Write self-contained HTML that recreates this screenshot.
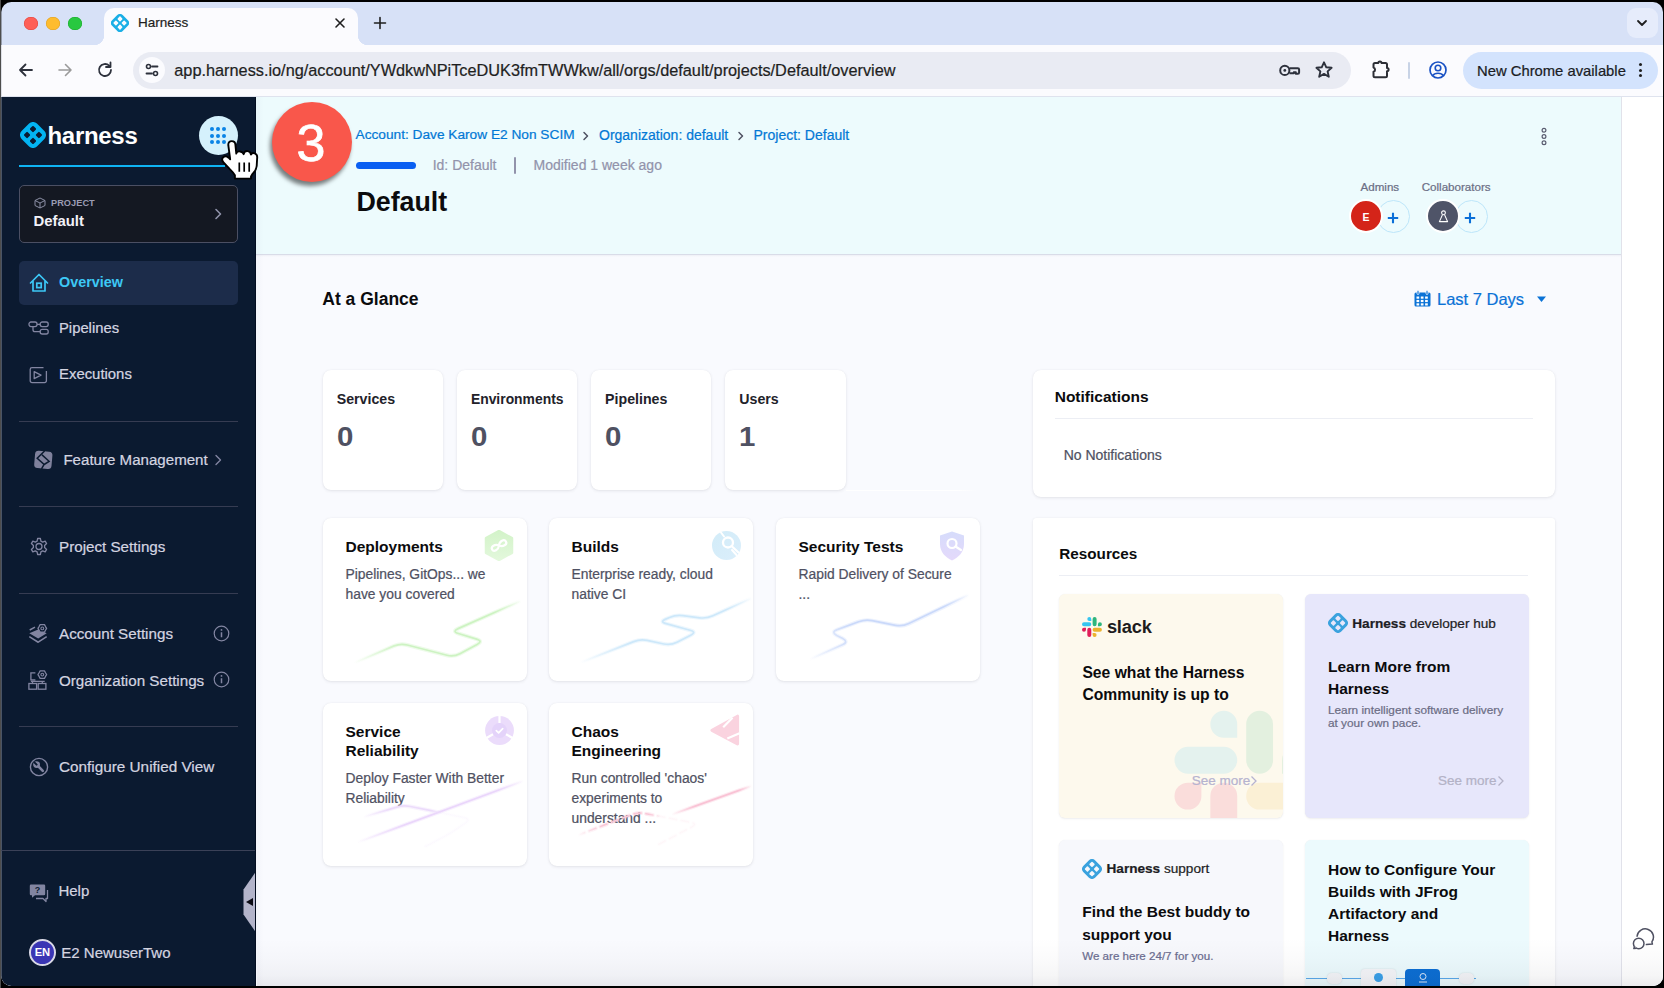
<!DOCTYPE html><html><head><meta charset="utf-8"><style>
html,body{margin:0;padding:0;}
body{width:1664px;height:988px;background:#000;position:relative;overflow:hidden;font-family:"Liberation Sans", sans-serif;}
.a{position:absolute;}
.t{position:absolute;white-space:nowrap;}
.r{-webkit-text-stroke:0.22px currentColor;}
#win{position:absolute;left:0;top:0;width:1664px;height:988px;clip-path:inset(2px 1px 2px 1.3px round 10px);background:#d7e1f7;}
</style></head><body>
<div class="a" style="left:0;top:0;width:1px;height:988px;background:#4d4d4d"></div>
<div id="win">

<div class="a" style="left:24.15px;top:16.6px;width:13.7px;height:13.7px;border-radius:50%;background:#fe5f57;box-shadow:inset 0 0 0 0.6px #e14640"></div>
<div class="a" style="left:46.15px;top:16.6px;width:13.7px;height:13.7px;border-radius:50%;background:#febc2e;box-shadow:inset 0 0 0 0.6px #dfa023"></div>
<div class="a" style="left:68.15px;top:16.6px;width:13.7px;height:13.7px;border-radius:50%;background:#28c840;box-shadow:inset 0 0 0 0.6px #1aab29"></div>
<div class="a" style="left:104px;top:8px;width:254px;height:40px;background:#fbfbfe;border-radius:10px 10px 0 0"></div>
<div class="a" style="left:94px;top:35px;width:10px;height:10px;background:radial-gradient(circle at 0 0, transparent 10px, #fbfbfe 10.5px)"></div>
<div class="a" style="left:358px;top:35px;width:10px;height:10px;background:radial-gradient(circle at 100% 0, transparent 10px, #fbfbfe 10.5px)"></div>
<svg class="a" style="left:111.2px;top:14.2px;" width="18" height="18" viewBox="0 0 18 18"><g transform="translate(9.0,9.0) rotate(45)"><rect x="-7.50" y="-7.50" width="15.00" height="15.00" rx="3.84" fill="#1aafe6"/><rect x="-4.86" y="-4.86" width="3.91" height="3.91" rx="0.70" fill="#fbfbfe"/><rect x="-4.86" y="0.96" width="3.91" height="3.91" rx="0.70" fill="#fbfbfe"/><rect x="0.96" y="-4.86" width="3.91" height="3.91" rx="0.70" fill="#fbfbfe"/><rect x="0.96" y="0.96" width="3.91" height="3.91" rx="0.70" fill="#fbfbfe"/></g></svg>
<div class="t r" style="left:138.0px;top:16.0px;font-size:13.5px;line-height:13.5px;color:#1f1f1f;font-weight:400;">Harness</div>
<svg class="a" style="left:334px;top:17px;" width="12" height="12" viewBox="0 0 12 12"><path d="M2 2L10 10M10 2L2 10" stroke="#1f1f1f" stroke-width="1.6" stroke-linecap="round"/></svg>
<svg class="a" style="left:373px;top:16px;" width="14" height="14" viewBox="0 0 14 14"><path d="M7 1.5V12.5M1.5 7H12.5" stroke="#1f1f1f" stroke-width="1.6" stroke-linecap="round"/></svg>
<div class="a" style="left:1627px;top:8px;width:31px;height:30px;background:#e6ecfb;border-radius:9px"></div>
<svg class="a" style="left:1636px;top:17px;" width="12" height="12" viewBox="0 0 12 12"><path d="M2 4L6 8L10 4" stroke="#1f1f1f" stroke-width="1.8" fill="none" stroke-linecap="round" stroke-linejoin="round"/></svg>
<div class="a" style="left:0px;top:45px;width:1664px;height:52px;background:#fbfbfe"></div>
<div class="a" style="left:0px;top:96px;width:1664px;height:1px;background:#dfe3ee"></div>
<svg class="a" style="left:16px;top:60px;" width="20" height="20" viewBox="0 0 20 20"><path d="M16 10H4M9.5 4.5L4 10L9.5 15.5" stroke="#2d313c" stroke-width="1.8" fill="none" stroke-linecap="round" stroke-linejoin="round"/></svg>
<svg class="a" style="left:55px;top:60px;" width="20" height="20" viewBox="0 0 20 20"><path d="M4 10H16M10.5 4.5L16 10L10.5 15.5" stroke="#9a9a9a" stroke-width="1.6" fill="none" stroke-linecap="round" stroke-linejoin="round"/></svg>
<svg class="a" style="left:95px;top:60px;" width="20" height="20" viewBox="0 0 20 20"><path d="M16 10A6 6 0 1 1 14.2 5.7" stroke="#2d313c" stroke-width="1.8" fill="none" stroke-linecap="round"/><path d="M15.5 2.5V7H11" stroke="#2d313c" stroke-width="1.8" fill="none" stroke-linecap="round" stroke-linejoin="round"/></svg>
<div class="a" style="left:133px;top:52px;width:1218px;height:37px;background:#e9ebf3;border-radius:18.5px"></div>
<div class="a" style="left:139px;top:57px;width:26px;height:26px;background:#fbfbfe;border-radius:50%"></div>
<svg class="a" style="left:142px;top:60px;" width="20" height="20" viewBox="0 0 20 20"><circle cx="6.5" cy="6.5" r="2" stroke="#2d313c" stroke-width="1.6" fill="none"/><path d="M10 6.5H15.5" stroke="#2d313c" stroke-width="1.8" stroke-linecap="round"/><circle cx="13.5" cy="13.5" r="2" stroke="#2d313c" stroke-width="1.6" fill="none"/><path d="M4.5 13.5H10" stroke="#2d313c" stroke-width="1.8" stroke-linecap="round"/></svg>
<div class="t r" style="left:174.3px;top:62.2px;font-size:16.3px;line-height:16.3px;color:#1f1f1f;font-weight:400;">app.harness.io/ng/account/YWdkwNPiTceDUK3fmTWWkw/all/orgs/default/projects/Default/overview</div>
<svg class="a" style="left:1276px;top:60px;" width="26" height="20" viewBox="0 0 26 20"><circle cx="8.8" cy="10.4" r="4.6" stroke="#2d313c" stroke-width="2" fill="none"/><circle cx="8.8" cy="10.4" r="1.4" fill="#2d313c"/><path d="M13.5 8.2H21.8A1.3 1.3 0 0 1 23.1 9.5V12.6A1.2 1.2 0 0 1 21.9 13.8H19.8V12.2H17.8V13.2H13.5" stroke="#2d313c" stroke-width="2" fill="none" stroke-linejoin="round"/></svg>
<svg class="a" style="left:1314px;top:60px;" width="20" height="20" viewBox="0 0 20 20"><path d="M10 2.3L12.3 7.3L17.6 7.8L13.6 11.4L14.8 16.7L10 13.9L5.2 16.7L6.4 11.4L2.4 7.8L7.7 7.3Z" stroke="#2d313c" stroke-width="1.9" fill="none" stroke-linejoin="round"/></svg>
<svg class="a" style="left:1370px;top:59px;" width="22" height="21" viewBox="0 0 22 21"><path d="M3.5 5.5A1.5 1.5 0 0 1 5 4H8.3A1.6 1.6 0 0 1 11.5 4H15.5A1.5 1.5 0 0 1 17 5.5V9A1.6 1.6 0 0 1 17 12.2V16.8A1.5 1.5 0 0 1 15.5 18.3H5A1.5 1.5 0 0 1 3.5 16.8V12.8A2.2 2.2 0 0 0 3.5 8.6Z" stroke="#2d2f36" stroke-width="2" fill="none" stroke-linejoin="round"/></svg>
<div class="a" style="left:1408px;top:62px;width:2px;height:17px;background:#c8d3e6;border-radius:1px"></div>
<svg class="a" style="left:1428px;top:60px;" width="20" height="20" viewBox="0 0 20 20"><circle cx="10" cy="10" r="8" stroke="#1a52c4" stroke-width="1.7" fill="none"/><circle cx="10" cy="8" r="2.8" stroke="#1a52c4" stroke-width="1.6" fill="none"/><path d="M4.8 15.5C6.5 12.5 13.5 12.5 15.2 15.5" stroke="#1a52c4" stroke-width="1.6" fill="none"/></svg>
<div class="a" style="left:1463px;top:52px;width:195px;height:37px;background:#d3e3fd;border-radius:18.5px"></div>
<div class="t r" style="left:1477.0px;top:63.5px;font-size:14.8px;line-height:14.8px;color:#1a1c24;font-weight:400;">New Chrome available</div>
<div class="a" style="left:1638.5px;top:63.0px;width:3px;height:3px;background:#1f1f1f;border-radius:50%"></div>
<div class="a" style="left:1638.5px;top:68.5px;width:3px;height:3px;background:#1f1f1f;border-radius:50%"></div>
<div class="a" style="left:1638.5px;top:74.0px;width:3px;height:3px;background:#1f1f1f;border-radius:50%"></div>
<div class="a" style="left:0px;top:97px;width:1664px;height:891px;background:#f9fafe"></div>
<div class="a" style="left:1621px;top:97px;width:43px;height:891px;background:#fff;border-left:1px solid #e1e2ea"></div>
<div class="a" style="left:1px;top:97px;width:255px;height:891px;background:#0b1a30"></div>
<svg class="a" style="left:19.5px;top:121.8px;" width="26" height="26" viewBox="0 0 26 26"><g transform="translate(13.0,13.0) rotate(45)"><rect x="-10.83" y="-10.83" width="21.67" height="21.67" rx="5.54" fill="#03b4f2"/><rect x="-6.67" y="-6.67" width="4.94" height="4.94" rx="1.01" fill="#0b1a30"/><rect x="-6.67" y="1.73" width="4.94" height="4.94" rx="1.01" fill="#0b1a30"/><rect x="1.73" y="-6.67" width="4.94" height="4.94" rx="1.01" fill="#0b1a30"/><rect x="1.73" y="1.73" width="4.94" height="4.94" rx="1.01" fill="#0b1a30"/></g></svg>
<div class="t" style="left:47.5px;top:123.9px;font-size:24.0px;line-height:24.0px;color:#ffffff;font-weight:700;letter-spacing:-0.3px;">harness</div>
<div class="a" style="left:198.5px;top:116px;width:39px;height:39px;background:#d5f1fc;border-radius:50%"></div>
<div class="a" style="left:209.5px;top:127.15px;width:4.2px;height:4.2px;background:#0a84e6;border-radius:50%"></div>
<div class="a" style="left:209.5px;top:133.55px;width:4.2px;height:4.2px;background:#0a84e6;border-radius:50%"></div>
<div class="a" style="left:209.5px;top:139.95px;width:4.2px;height:4.2px;background:#0a84e6;border-radius:50%"></div>
<div class="a" style="left:215.9px;top:127.15px;width:4.2px;height:4.2px;background:#0a84e6;border-radius:50%"></div>
<div class="a" style="left:215.9px;top:133.55px;width:4.2px;height:4.2px;background:#0a84e6;border-radius:50%"></div>
<div class="a" style="left:215.9px;top:139.95px;width:4.2px;height:4.2px;background:#0a84e6;border-radius:50%"></div>
<div class="a" style="left:222.3px;top:127.15px;width:4.2px;height:4.2px;background:#0a84e6;border-radius:50%"></div>
<div class="a" style="left:222.3px;top:133.55px;width:4.2px;height:4.2px;background:#0a84e6;border-radius:50%"></div>
<div class="a" style="left:222.3px;top:139.95px;width:4.2px;height:4.2px;background:#0a84e6;border-radius:50%"></div>
<div class="a" style="left:19px;top:165px;width:206px;height:2.2px;background:#0fb3f2"></div>
<div class="a" style="left:19px;top:185px;width:219px;height:58px;background:#141822;border:1px solid #4b4f63;border-radius:5px;box-sizing:border-box"></div>
<svg class="a" style="left:34px;top:197px;" width="12" height="12" viewBox="0 0 12 12"><path d="M6 1L11 3.5V8.5L6 11L1 8.5V3.5Z M1 3.5L6 6L11 3.5 M6 6V11" stroke="#8b8ea5" stroke-width="1" fill="none" stroke-linejoin="round"/></svg>
<div class="t" style="left:51.0px;top:198.8px;font-size:9.2px;line-height:9.2px;color:#9a9cb3;font-weight:700;letter-spacing:0.05px;">PROJECT</div>
<div class="t" style="left:33.4px;top:213.9px;font-size:14.9px;line-height:14.9px;color:#f1f1f8;font-weight:700;">Default</div>
<svg class="a" style="left:213px;top:207px;" width="10" height="14" viewBox="0 0 10 14"><path d="M3 2.5L7.5 7L3 11.5" stroke="#9093aa" stroke-width="1.6" fill="none" stroke-linecap="round" stroke-linejoin="round"/></svg>
<div class="a" style="left:19px;top:260.5px;width:219px;height:44px;background:#1c2c4a;border-radius:5px"></div>
<svg class="a" style="left:28px;top:272px;" width="22" height="21" viewBox="0 0 22 21"><path d="M2.5 11L11 2.5L19.5 11M5 9V19H17V9" stroke="#3cc8f6" stroke-width="1.7" fill="none" stroke-linejoin="round" stroke-linecap="round"/><rect x="8.8" y="11.2" width="4.4" height="4.4" stroke="#3cc8f6" stroke-width="1.7" fill="none"/></svg>
<div class="t" style="left:59.0px;top:275.0px;font-size:14.4px;line-height:14.4px;color:#3dc8f5;font-weight:700;">Overview</div>
<svg class="a" style="left:28px;top:321px;" width="21" height="15" viewBox="0 0 21 15"><rect x="1" y="1" width="8" height="4.6" rx="2" stroke="#8285a1" stroke-width="1.3" fill="none"/><rect x="12.2" y="1" width="8" height="4.6" rx="2" stroke="#8285a1" stroke-width="1.3" fill="none"/><rect x="12.2" y="8.4" width="8" height="4.6" rx="2" stroke="#8285a1" stroke-width="1.3" fill="none"/><path d="M9 3.3H12.2M5 5.6V8.7Q5 10.7 7 10.7H12.2" stroke="#8285a1" stroke-width="1.3" fill="none"/></svg>
<div class="t r" style="left:59.0px;top:321.0px;font-size:14.8px;line-height:14.8px;color:#d4d5e0;font-weight:400;">Pipelines</div>
<svg class="a" style="left:29px;top:366px;" width="20" height="18" viewBox="0 0 20 18"><path d="M14.5 1.6H3A1.8 1.8 0 0 0 1.2 3.4V14.8A1.8 1.8 0 0 0 3 16.6H15.6A1.8 1.8 0 0 0 17.4 14.8V5" stroke="#8285a1" stroke-width="1.3" fill="none"/><path d="M5.2 5.6L12 9.1L5.2 12.6Z" stroke="#8285a1" stroke-width="1.3" fill="none" stroke-linejoin="round"/></svg>
<div class="t r" style="left:59.0px;top:367.4px;font-size:14.9px;line-height:14.9px;color:#d4d5e0;font-weight:400;">Executions</div>
<div class="a" style="left:19px;top:421px;width:219px;height:1px;background:#363c52"></div>
<svg class="a" style="left:33px;top:449px;" width="21" height="21" viewBox="0 0 21 21"><g transform="rotate(5 10.3 10.9)"><rect x="1.6" y="2.2" width="17.4" height="17.4" rx="3.6" fill="#7f819c"/></g><path d="M11.6 2.0L4.2 9.3L11.1 15.5L8.5 19.8M9 5.9L16.1 12.3L11.1 15.5" stroke="#0b1a30" stroke-width="1.5" fill="none" stroke-linejoin="miter"/></svg>
<div class="t r" style="left:63.4px;top:451.5px;font-size:15.1px;line-height:15.1px;color:#d4d5e0;font-weight:400;">Feature Management</div>
<svg class="a" style="left:213px;top:453px;" width="10" height="14" viewBox="0 0 10 14"><path d="M3 2.5L7.5 7L3 11.5" stroke="#8285a1" stroke-width="1.4" fill="none" stroke-linecap="round" stroke-linejoin="round"/></svg>
<div class="a" style="left:19px;top:506px;width:219px;height:1px;background:#363c52"></div>
<svg class="a" style="left:29px;top:537px;" width="20" height="20" viewBox="0 0 20 20"><path d="M8.6 1.5H11.4L11.9 4.1L13.7 5.1L16.2 4.2L17.6 6.6L15.6 8.4V10.6L17.6 12.4L16.2 14.8L13.7 13.9L11.9 14.9L11.4 17.5H8.6L8.1 14.9L6.3 13.9L3.8 14.8L2.4 12.4L4.4 10.6V8.4L2.4 6.6L3.8 4.2L6.3 5.1L8.1 4.1Z" stroke="#8285a1" stroke-width="1.3" fill="none" stroke-linejoin="round"/><circle cx="10" cy="9.5" r="3" stroke="#8285a1" stroke-width="1.3" fill="none"/></svg>
<div class="t r" style="left:59.0px;top:538.6px;font-size:15.2px;line-height:15.2px;color:#d4d5e0;font-weight:400;">Project Settings</div>
<div class="a" style="left:19px;top:593px;width:219px;height:1px;background:#363c52"></div>
<svg class="a" style="left:28px;top:623px;" width="21" height="21" viewBox="0 0 21 21"><path d="M1.3 10.2L10.2 6.6L18.7 10.2L10.2 15.5Z" fill="#8285a1"/><path d="M1.3 13.6L10.2 19.2L18.7 13.6" stroke="#8285a1" stroke-width="1.6" fill="none" stroke-linejoin="round"/><path d="M1.7 7L7 4.2" stroke="#8285a1" stroke-width="1.5"/><polygon points="18.60,5.40 17.50,7.25 16.45,9.12 14.30,9.10 12.15,9.12 11.10,7.25 10.00,5.40 11.10,3.55 12.15,1.68 14.30,1.70 16.45,1.68 17.50,3.55" fill="#0b1a30" stroke="#8285a1" stroke-width="1.3" stroke-linejoin="round"/><circle cx="14.3" cy="5.4" r="1.4" stroke="#8285a1" stroke-width="1.1" fill="none"/></svg>
<div class="t r" style="left:59.0px;top:626.1px;font-size:15.2px;line-height:15.2px;color:#d4d5e0;font-weight:400;">Account Settings</div>
<svg class="a" style="left:213px;top:625px;" width="17" height="17" viewBox="0 0 17 17"><circle cx="8.5" cy="8.5" r="7.3" stroke="#8285a1" stroke-width="1.2" fill="none"/><path d="M8.5 7.3V12.3" stroke="#8285a1" stroke-width="1.5"/><circle cx="8.5" cy="4.9" r="0.9" fill="#8285a1"/></svg>
<svg class="a" style="left:28px;top:669px;" width="21" height="22" viewBox="0 0 21 22"><path d="M7.4 3.9H2.9V10.8H7.4M2.9 12.4H16.7M4.5 12.4V14.5M14.3 12.4V14.5" stroke="#8285a1" stroke-width="1.3" fill="none"/><rect x="0.9" y="14.5" width="7.7" height="5.7" stroke="#8285a1" stroke-width="1.3" fill="none"/><rect x="10.2" y="14.5" width="7.7" height="5.7" stroke="#8285a1" stroke-width="1.3" fill="none"/><polygon points="18.60,5.60 17.50,7.45 16.45,9.32 14.30,9.30 12.15,9.32 11.10,7.45 10.00,5.60 11.10,3.75 12.15,1.88 14.30,1.90 16.45,1.88 17.50,3.75" fill="#0b1a30" stroke="#8285a1" stroke-width="1.3" stroke-linejoin="round"/><circle cx="14.3" cy="5.6" r="1.4" stroke="#8285a1" stroke-width="1.1" fill="none"/></svg>
<div class="t r" style="left:59.0px;top:672.9px;font-size:15.2px;line-height:15.2px;color:#d4d5e0;font-weight:400;">Organization Settings</div>
<svg class="a" style="left:213px;top:671px;" width="17" height="17" viewBox="0 0 17 17"><circle cx="8.5" cy="8.5" r="7.3" stroke="#8285a1" stroke-width="1.2" fill="none"/><path d="M8.5 7.3V12.3" stroke="#8285a1" stroke-width="1.5"/><circle cx="8.5" cy="4.9" r="0.9" fill="#8285a1"/></svg>
<div class="a" style="left:19px;top:726px;width:219px;height:1px;background:#363c52"></div>
<svg class="a" style="left:29px;top:757px;" width="20" height="20" viewBox="0 0 20 20"><circle cx="10" cy="10" r="8.6" stroke="#8285a1" stroke-width="1.4" fill="none"/><circle cx="7.6" cy="7.6" r="3.4" fill="#8285a1"/><path d="M8.5 8.5L13.8 13.8" stroke="#8285a1" stroke-width="2.6" stroke-linecap="round"/><path d="M5.6 5.6L7.6 7.6" stroke="#0b1a30" stroke-width="2.0" stroke-linecap="round"/></svg>
<div class="t r" style="left:59.0px;top:758.5px;font-size:15.3px;line-height:15.3px;color:#d4d5e0;font-weight:400;">Configure Unified View</div>
<div class="a" style="left:1px;top:850px;width:255px;height:1px;background:#3b4157"></div>
<svg class="a" style="left:29px;top:883px;" width="22" height="20" viewBox="0 0 22 20"><path d="M2 1.5H15A1.2 1.2 0 0 1 16.2 2.7V11A1.2 1.2 0 0 1 15 12.2H6L3 14.8V12.2H2A1.2 1.2 0 0 1 0.8 11V2.7A1.2 1.2 0 0 1 2 1.5Z" fill="#8285a1"/><path d="M18.5 7V15.5H17V18.5L14 15.5H7" stroke="#8285a1" stroke-width="1.3" fill="none" stroke-linejoin="round"/><text x="8.5" y="10" font-size="9" font-weight="700" text-anchor="middle" fill="#0b1a30" font-family="Liberation Sans">?</text></svg>
<div class="t r" style="left:58.4px;top:883.3px;font-size:15px;line-height:15px;color:#d4d5e0;font-weight:400;">Help</div>
<div class="a" style="left:28.5px;top:938.5px;width:27.5px;height:27.5px;background:#3a36b4;border:2.1px solid #d9d9e6;border-radius:50%;box-sizing:border-box"></div>
<div class="t" style="left:34.8px;top:946.8px;font-size:11.2px;line-height:11.2px;color:#ffffff;font-weight:700;letter-spacing:-0.2px;">EN</div>
<div class="t r" style="left:61.3px;top:944.5px;font-size:15px;line-height:15px;color:#d4d5e0;font-weight:400;">E2 NewuserTwo</div>
<svg class="a" style="left:243px;top:871px;" width="13" height="62" viewBox="0 0 13 62"><path d="M13 0.5V61.5L0.5 43.5V18.5Z" fill="#b3b4ca"/><path d="M3 31L10 27V35Z" fill="#0b0b14"/></svg>
<div class="a" style="left:256px;top:97px;width:1365px;height:158px;background:#edfbfd;border-bottom:1px solid #d9dce8;box-sizing:border-box"></div>
<div class="a" style="left:256px;top:97px;width:8px;height:891px;background:linear-gradient(to right, rgba(20,30,90,0.025), rgba(20,30,90,0))"></div>
<div class="a" style="left:256px;top:255px;width:1365px;height:2px;background:linear-gradient(to bottom, rgba(40,40,90,0.05), rgba(40,40,90,0))"></div>
<div class="a" style="left:255px;top:97px;width:1.2px;height:891px;background:#030d20"></div>
<div class="t r" style="left:355.5px;top:128.4px;font-size:13.7px;line-height:13.7px;color:#0278d5;font-weight:400;">Account: Dave Karow E2 Non SCIM</div>
<svg class="a" style="left:580px;top:130px;" width="12" height="12" viewBox="0 0 12 12"><path d="M4 2.5L7.5 6L4 9.5" stroke="#4f5162" stroke-width="1.5" fill="none" stroke-linecap="round" stroke-linejoin="round"/></svg>
<div class="t r" style="left:599.0px;top:128.1px;font-size:14.0px;line-height:14.0px;color:#0278d5;font-weight:400;">Organization: default</div>
<svg class="a" style="left:735px;top:130px;" width="12" height="12" viewBox="0 0 12 12"><path d="M4 2.5L7.5 6L4 9.5" stroke="#4f5162" stroke-width="1.5" fill="none" stroke-linecap="round" stroke-linejoin="round"/></svg>
<div class="t r" style="left:753.5px;top:128.1px;font-size:14.0px;line-height:14.0px;color:#0278d5;font-weight:400;">Project: Default</div>
<div class="a" style="left:355.5px;top:162px;width:60px;height:7px;background:#0a5ff2;border-radius:4px"></div>
<div class="t r" style="left:432.7px;top:157.9px;font-size:14px;line-height:14px;color:#9293ab;font-weight:400;">Id: Default</div>
<div class="a" style="left:514px;top:157px;width:2px;height:17px;background:#9293ab;border-radius:1px"></div>
<div class="t r" style="left:533.5px;top:157.9px;font-size:14px;line-height:14px;color:#9293ab;font-weight:400;">Modified 1 week ago</div>
<div class="t" style="left:356.4px;top:188.6px;font-size:26.8px;line-height:26.8px;color:#0b0b0d;font-weight:700;">Default</div>
<svg class="a" style="left:1538px;top:126px;" width="12" height="22" viewBox="0 0 12 22"><circle cx="6" cy="4.2" r="1.9" stroke="#5a5c70" stroke-width="1.2" fill="none"/><circle cx="6" cy="10.5" r="1.9" stroke="#5a5c70" stroke-width="1.2" fill="none"/><circle cx="6" cy="16.8" r="1.9" stroke="#5a5c70" stroke-width="1.2" fill="none"/></svg>
<div class="t r" style="left:1360.5px;top:181.1px;font-size:11.6px;line-height:11.6px;color:#6b6e85;font-weight:400;">Admins</div>
<div class="t r" style="left:1421.7px;top:181.1px;font-size:11.6px;line-height:11.6px;color:#6b6e85;font-weight:400;">Collaborators</div>
<div class="a" style="left:1377.0px;top:200.0px;width:33px;height:33px;border:1.8px solid #bde6fa;border-radius:50%;box-sizing:border-box;background:#edfbfd"></div>
<svg class="a" style="left:1386.5px;top:211.9px;" width="12" height="12" viewBox="0 0 12 12"><path d="M6 0.8V11.2M0.8 6H11.2" stroke="#0b6fd8" stroke-width="2.1"/></svg>
<div class="a" style="left:1349px;top:199px;width:34px;height:34px;background:#d42419;border:2.2px solid #ffffff;border-radius:50%;box-sizing:border-box"></div>
<div class="t" style="left:1362.6px;top:212.1px;font-size:10.5px;line-height:10.5px;color:#ffffff;font-weight:700;">E</div>
<div class="a" style="left:1454.5px;top:200.0px;width:33px;height:33px;border:1.8px solid #bde6fa;border-radius:50%;box-sizing:border-box;background:#edfbfd"></div>
<svg class="a" style="left:1464px;top:211.9px;" width="12" height="12" viewBox="0 0 12 12"><path d="M6 0.8V11.2M0.8 6H11.2" stroke="#0b6fd8" stroke-width="2.1"/></svg>
<div class="a" style="left:1426px;top:199px;width:34px;height:34px;background:#4f5468;border:2.2px solid #ffffff;border-radius:50%;box-sizing:border-box"></div>
<svg class="a" style="left:1437.5px;top:210px;" width="11" height="13" viewBox="0 0 11 13"><circle cx="5.5" cy="2.8" r="1.9" stroke="#fff" stroke-width="1.1" fill="none"/><path d="M4.4 4.9L1.4 11.6H9.6L6.6 4.9" stroke="#fff" stroke-width="1.1" fill="none" stroke-linejoin="round"/></svg>
<div class="a" style="left:272px;top:102px;width:80px;height:80px;background:#f9574b;border-radius:50%;box-shadow:-2px 4px 4px rgba(0,0,0,0.5)"></div>
<div class="t r" style="left:296.5px;top:116.5px;font-size:52px;line-height:52px;color:#ffffff;font-weight:400;-webkit-text-stroke:0.7px #fff;">3</div>
<div class="t" style="left:322.3px;top:290.8px;font-size:17.5px;line-height:17.5px;color:#0b0b0d;font-weight:700;">At a Glance</div>
<svg class="a" style="left:1414px;top:290px;" width="17" height="17" viewBox="0 0 17 17"><rect x="0.5" y="2.5" width="16" height="14" rx="1.5" fill="#0b72d6"/><rect x="3" y="0.5" width="2" height="4" rx="1" fill="#0b72d6" stroke="#f8f9fe" stroke-width="0.8"/><rect x="12" y="0.5" width="2" height="4" rx="1" fill="#0b72d6" stroke="#f8f9fe" stroke-width="0.8"/><rect x="2.5" y="6.5" width="2.7" height="2.2" fill="#fff"/><rect x="2.5" y="9.9" width="2.7" height="2.2" fill="#fff"/><rect x="2.5" y="13.3" width="2.7" height="2.2" fill="#fff"/><rect x="6.8" y="6.5" width="2.7" height="2.2" fill="#fff"/><rect x="6.8" y="9.9" width="2.7" height="2.2" fill="#fff"/><rect x="6.8" y="13.3" width="2.7" height="2.2" fill="#fff"/><rect x="11.1" y="6.5" width="2.7" height="2.2" fill="#fff"/><rect x="11.1" y="9.9" width="2.7" height="2.2" fill="#fff"/><rect x="11.1" y="13.3" width="2.7" height="2.2" fill="#fff"/></svg>
<div class="t r" style="left:1437.0px;top:290.8px;font-size:16.5px;line-height:16.5px;color:#0b72d6;font-weight:400;">Last 7 Days</div>
<svg class="a" style="left:1536px;top:295px;" width="11" height="8" viewBox="0 0 11 8"><path d="M1 1.5H10L5.5 7Z" fill="#0b72d6"/></svg>
<div class="a" style="left:322.5px;top:370px;width:120.5px;height:120px;background:#fff;border-radius:8px;box-shadow:0 0 1px rgba(40,41,61,0.08),0 1px 3px rgba(96,97,112,0.14)"></div>
<div class="t" style="left:336.7px;top:392.3px;font-size:14.2px;line-height:14.2px;color:#22222a;font-weight:700;">Services</div>
<div class="t" style="left:336.5px;top:422.5px;font-size:27.8px;line-height:27.8px;color:#4f5162;font-weight:700;transform:scaleX(1.06);transform-origin:0 0;">0</div>
<div class="a" style="left:456.7px;top:370px;width:120.5px;height:120px;background:#fff;border-radius:8px;box-shadow:0 0 1px rgba(40,41,61,0.08),0 1px 3px rgba(96,97,112,0.14)"></div>
<div class="t" style="left:470.9px;top:392.5px;font-size:13.9px;line-height:13.9px;color:#22222a;font-weight:700;">Environments</div>
<div class="t" style="left:470.7px;top:422.5px;font-size:27.8px;line-height:27.8px;color:#4f5162;font-weight:700;transform:scaleX(1.06);transform-origin:0 0;">0</div>
<div class="a" style="left:590.9px;top:370px;width:120.5px;height:120px;background:#fff;border-radius:8px;box-shadow:0 0 1px rgba(40,41,61,0.08),0 1px 3px rgba(96,97,112,0.14)"></div>
<div class="t" style="left:605.1px;top:392.3px;font-size:14.2px;line-height:14.2px;color:#22222a;font-weight:700;">Pipelines</div>
<div class="t" style="left:604.9px;top:422.5px;font-size:27.8px;line-height:27.8px;color:#4f5162;font-weight:700;transform:scaleX(1.06);transform-origin:0 0;">0</div>
<div class="a" style="left:725.1px;top:370px;width:120.5px;height:120px;background:#fff;border-radius:8px;box-shadow:0 0 1px rgba(40,41,61,0.08),0 1px 3px rgba(96,97,112,0.14)"></div>
<div class="t" style="left:739.3px;top:392.3px;font-size:14.2px;line-height:14.2px;color:#22222a;font-weight:700;">Users</div>
<div class="t" style="left:739.1px;top:422.5px;font-size:27.8px;line-height:27.8px;color:#4f5162;font-weight:700;transform:scaleX(1.06);transform-origin:0 0;">1</div>
<div class="a" style="left:846px;top:490px;width:132px;height:1px;background:linear-gradient(to right, #ffffff 85%, rgba(255,255,255,0))"></div>
<div class="a" style="left:322.5px;top:518px;width:204px;height:162.5px;background:#fff;border-radius:8px;box-shadow:0 0 1px rgba(40,41,61,0.08),0 1px 3px rgba(96,97,112,0.14)"></div>
<div class="t" style="left:345.5px;top:539.3px;font-size:15.5px;line-height:15.5px;color:#0b0b0d;font-weight:700;">Deployments</div>
<div class="t r" style="left:345.5px;top:567.9px;font-size:13.85px;line-height:13.85px;color:#4f5162;font-weight:400;">Pipelines, GitOps... we</div>
<div class="t r" style="left:345.5px;top:587.9px;font-size:13.85px;line-height:13.85px;color:#4f5162;font-weight:400;">have you covered</div>
<div class="a" style="left:548.5px;top:518px;width:204px;height:162.5px;background:#fff;border-radius:8px;box-shadow:0 0 1px rgba(40,41,61,0.08),0 1px 3px rgba(96,97,112,0.14)"></div>
<div class="t" style="left:571.5px;top:539.3px;font-size:15.5px;line-height:15.5px;color:#0b0b0d;font-weight:700;">Builds</div>
<div class="t r" style="left:571.5px;top:567.9px;font-size:13.85px;line-height:13.85px;color:#4f5162;font-weight:400;">Enterprise ready, cloud</div>
<div class="t r" style="left:571.5px;top:587.9px;font-size:13.85px;line-height:13.85px;color:#4f5162;font-weight:400;">native CI</div>
<div class="a" style="left:775.5px;top:518px;width:204px;height:162.5px;background:#fff;border-radius:8px;box-shadow:0 0 1px rgba(40,41,61,0.08),0 1px 3px rgba(96,97,112,0.14)"></div>
<div class="t" style="left:798.5px;top:539.3px;font-size:15.5px;line-height:15.5px;color:#0b0b0d;font-weight:700;">Security Tests</div>
<div class="t r" style="left:798.5px;top:567.9px;font-size:13.85px;line-height:13.85px;color:#4f5162;font-weight:400;">Rapid Delivery of Secure</div>
<div class="t r" style="left:798.5px;top:587.9px;font-size:13.85px;line-height:13.85px;color:#4f5162;font-weight:400;">...</div>
<div class="a" style="left:322.5px;top:703.4px;width:204px;height:162.5px;background:#fff;border-radius:8px;box-shadow:0 0 1px rgba(40,41,61,0.08),0 1px 3px rgba(96,97,112,0.14)"></div>
<div class="t" style="left:345.5px;top:723.5px;font-size:15.5px;line-height:15.5px;color:#0b0b0d;font-weight:700;">Service</div>
<div class="t" style="left:345.5px;top:742.9px;font-size:15.5px;line-height:15.5px;color:#0b0b0d;font-weight:700;">Reliability</div>
<div class="t r" style="left:345.5px;top:771.7px;font-size:13.85px;line-height:13.85px;color:#4f5162;font-weight:400;">Deploy Faster With Better</div>
<div class="t r" style="left:345.5px;top:791.7px;font-size:13.85px;line-height:13.85px;color:#4f5162;font-weight:400;">Reliability</div>
<div class="a" style="left:548.5px;top:703.4px;width:204px;height:162.5px;background:#fff;border-radius:8px;box-shadow:0 0 1px rgba(40,41,61,0.08),0 1px 3px rgba(96,97,112,0.14)"></div>
<div class="t" style="left:571.5px;top:723.5px;font-size:15.5px;line-height:15.5px;color:#0b0b0d;font-weight:700;">Chaos</div>
<div class="t" style="left:571.5px;top:742.9px;font-size:15.5px;line-height:15.5px;color:#0b0b0d;font-weight:700;">Engineering</div>
<div class="t r" style="left:571.5px;top:771.7px;font-size:13.85px;line-height:13.85px;color:#4f5162;font-weight:400;">Run controlled 'chaos'</div>
<div class="t r" style="left:571.5px;top:791.7px;font-size:13.85px;line-height:13.85px;color:#4f5162;font-weight:400;">experiments to</div>
<div class="t r" style="left:571.5px;top:811.7px;font-size:13.85px;line-height:13.85px;color:#4f5162;font-weight:400;">understand ...</div>
<div class="a" style="left:1032.6px;top:370px;width:522.4px;height:126.5px;background:#fff;border-radius:8px;box-shadow:0 0 1px rgba(40,41,61,0.08),0 1px 3px rgba(96,97,112,0.14)"></div>
<div class="t" style="left:1054.7px;top:388.7px;font-size:15.5px;line-height:15.5px;color:#0b0b0d;font-weight:700;">Notifications</div>
<div class="a" style="left:1054.7px;top:418px;width:478.8px;height:1px;background:#eceef4"></div>
<div class="t r" style="left:1063.7px;top:448.1px;font-size:14px;line-height:14px;color:#4f5162;font-weight:400;">No Notifications</div>
<div class="a" style="left:1032.6px;top:518px;width:522.4px;height:520px;background:#fff;border-radius:3px;box-shadow:0 0 1px rgba(40,41,61,0.08),0 1px 3px rgba(96,97,112,0.12)"></div>
<div class="t" style="left:1059.3px;top:546.1px;font-size:15.25px;line-height:15.25px;color:#0b0b0d;font-weight:700;">Resources</div>
<div class="a" style="left:1059.3px;top:575px;width:469px;height:1px;background:#eceef4"></div>
<div class="a" style="left:1059px;top:594.3px;width:224px;height:224px;background:#fdf9ed;border-radius:6px;box-shadow:0 0 1px rgba(40,41,61,0.06),0 1px 2px rgba(96,97,112,0.10)"></div>
<div class="a" style="left:1304.6px;top:594.3px;width:224.4px;height:224px;background:#e7e7fb;border-radius:6px;box-shadow:0 0 1px rgba(40,41,61,0.06),0 1px 2px rgba(96,97,112,0.10)"></div>
<div class="a" style="left:1059px;top:840px;width:224px;height:200px;background:#f7f8fc;border-radius:6px;box-shadow:0 0 1px rgba(40,41,61,0.06),0 1px 2px rgba(96,97,112,0.10)"></div>
<div class="a" style="left:1304.6px;top:840px;width:224.4px;height:200px;background:#ecfafd;border-radius:6px;box-shadow:0 0 1px rgba(40,41,61,0.06),0 1px 2px rgba(96,97,112,0.10)"></div>
<div class="a" style="left:1059px;top:594.3px;width:224px;height:224px;overflow:hidden;border-radius:6px">
<svg class="a" style="left:0;top:0" width="224" height="224" viewBox="0 0 224 224"><g opacity="0.12" transform="translate(115.5 116.5) scale(2.5)"><path d="M19.712.133a5.381 5.381 0 0 0-5.376 5.387 5.381 5.381 0 0 0 5.376 5.386h5.376V5.52A5.381 5.381 0 0 0 19.712.133m0 14.365H5.376A5.381 5.381 0 0 0 0 19.884a5.381 5.381 0 0 0 5.376 5.387h14.336a5.381 5.381 0 0 0 5.376-5.387 5.381 5.381 0 0 0-5.376-5.386" fill="#36C5F0"/><path d="M53.76 19.884a5.381 5.381 0 0 0-5.376-5.386 5.381 5.381 0 0 0-5.376 5.386v5.387h5.376a5.381 5.381 0 0 0 5.376-5.387m-14.336 0V5.52A5.381 5.381 0 0 0 34.048.133a5.381 5.381 0 0 0-5.376 5.387v14.364a5.381 5.381 0 0 0 5.376 5.387 5.381 5.381 0 0 0 5.376-5.387" fill="#2EB67D"/><path d="M34.048 54a5.381 5.381 0 0 0 5.376-5.387 5.381 5.381 0 0 0-5.376-5.386h-5.376v5.386A5.381 5.381 0 0 0 34.048 54m0-14.365h14.336a5.381 5.381 0 0 0 5.376-5.386 5.381 5.381 0 0 0-5.376-5.387H34.048a5.381 5.381 0 0 0-5.376 5.387 5.381 5.381 0 0 0 5.376 5.386" fill="#ECB22E"/><path d="M0 34.249a5.381 5.381 0 0 0 5.376 5.386 5.381 5.381 0 0 0 5.376-5.386v-5.387H5.376A5.381 5.381 0 0 0 0 34.249m14.336 0v14.364A5.381 5.381 0 0 0 19.712 54a5.381 5.381 0 0 0 5.376-5.387V34.249a5.381 5.381 0 0 0-5.376-5.387 5.381 5.381 0 0 0-5.376 5.387" fill="#E01E5A"/></g></svg>
</div>
<svg class="a" style="left:1081.6px;top:616.6px;" width="20" height="20" viewBox="0 0 54 54"><path d="M19.712.133a5.381 5.381 0 0 0-5.376 5.387 5.381 5.381 0 0 0 5.376 5.386h5.376V5.52A5.381 5.381 0 0 0 19.712.133m0 14.365H5.376A5.381 5.381 0 0 0 0 19.884a5.381 5.381 0 0 0 5.376 5.387h14.336a5.381 5.381 0 0 0 5.376-5.387 5.381 5.381 0 0 0-5.376-5.386" fill="#36C5F0"/><path d="M53.76 19.884a5.381 5.381 0 0 0-5.376-5.386 5.381 5.381 0 0 0-5.376 5.386v5.387h5.376a5.381 5.381 0 0 0 5.376-5.387m-14.336 0V5.52A5.381 5.381 0 0 0 34.048.133a5.381 5.381 0 0 0-5.376 5.387v14.364a5.381 5.381 0 0 0 5.376 5.387 5.381 5.381 0 0 0 5.376-5.387" fill="#2EB67D"/><path d="M34.048 54a5.381 5.381 0 0 0 5.376-5.387 5.381 5.381 0 0 0-5.376-5.386h-5.376v5.386A5.381 5.381 0 0 0 34.048 54m0-14.365h14.336a5.381 5.381 0 0 0 5.376-5.386 5.381 5.381 0 0 0-5.376-5.387H34.048a5.381 5.381 0 0 0-5.376 5.387 5.381 5.381 0 0 0 5.376 5.386" fill="#ECB22E"/><path d="M0 34.249a5.381 5.381 0 0 0 5.376 5.386 5.381 5.381 0 0 0 5.376-5.386v-5.387H5.376A5.381 5.381 0 0 0 0 34.249m14.336 0v14.364A5.381 5.381 0 0 0 19.712 54a5.381 5.381 0 0 0 5.376-5.387V34.249a5.381 5.381 0 0 0-5.376-5.387 5.381 5.381 0 0 0-5.376 5.387" fill="#E01E5A"/></svg>
<div class="t" style="left:1106.9px;top:617.8px;font-size:18.3px;line-height:18.3px;color:#1d1c1d;font-weight:700;letter-spacing:-0.2px;">slack</div>
<div class="t" style="left:1082.4px;top:665.2px;font-size:15.7px;line-height:15.7px;color:#0b0b0d;font-weight:700;">See what the Harness</div>
<div class="t" style="left:1082.4px;top:687.3px;font-size:15.7px;line-height:15.7px;color:#0b0b0d;font-weight:700;">Community is up to</div>
<div class="t r" style="left:1191.8px;top:774.3px;font-size:13.5px;line-height:13.5px;color:#b6b3d0;font-weight:400;">See more</div>
<svg class="a" style="left:1249px;top:775px;" width="10" height="12" viewBox="0 0 10 12"><path d="M2.5 1.5L7 6L2.5 10.5" stroke="#b6b3d0" stroke-width="1.3" fill="none"/></svg>
<svg class="a" style="left:1327.5px;top:613.3px;" width="20" height="20" viewBox="0 0 20 20"><g transform="translate(10.0,10.0) rotate(45)"><rect x="-8.33" y="-8.33" width="16.67" height="16.67" rx="4.26" fill="#3aa2de"/><rect x="-5.33" y="-5.33" width="4.19" height="4.19" rx="0.78" fill="#e7e7fb"/><rect x="-5.33" y="1.14" width="4.19" height="4.19" rx="0.78" fill="#e7e7fb"/><rect x="1.14" y="-5.33" width="4.19" height="4.19" rx="0.78" fill="#e7e7fb"/><rect x="1.14" y="1.14" width="4.19" height="4.19" rx="0.78" fill="#e7e7fb"/></g></svg>
<div class="t r" style="left:1352.3px;top:616.5px;font-size:13.6px;line-height:13.6px;color:#1d1d24;font-weight:400;"><b>Harness</b> developer hub</div>
<div class="t" style="left:1328.0px;top:658.9px;font-size:15.5px;line-height:15.5px;color:#0b0b0d;font-weight:700;">Learn More from</div>
<div class="t" style="left:1328.0px;top:680.9px;font-size:15.5px;line-height:15.5px;color:#0b0b0d;font-weight:700;">Harness</div>
<div class="t r" style="left:1328.0px;top:705.0px;font-size:11.8px;line-height:11.8px;color:#6b6d85;font-weight:400;">Learn intelligent software delivery</div>
<div class="t r" style="left:1328.0px;top:718.0px;font-size:11.8px;line-height:11.8px;color:#6b6d85;font-weight:400;">at your own pace.</div>
<div class="t r" style="left:1438.0px;top:774.3px;font-size:13.5px;line-height:13.5px;color:#b3b2c6;font-weight:400;">See more</div>
<svg class="a" style="left:1495.5px;top:775px;" width="10" height="12" viewBox="0 0 10 12"><path d="M2.5 1.5L7 6L2.5 10.5" stroke="#b3b2c6" stroke-width="1.3" fill="none"/></svg>
<svg class="a" style="left:1081.9px;top:858.8px;" width="20" height="20" viewBox="0 0 20 20"><g transform="translate(10.0,10.0) rotate(45)"><rect x="-8.33" y="-8.33" width="16.67" height="16.67" rx="4.26" fill="#3aa2de"/><rect x="-5.33" y="-5.33" width="4.19" height="4.19" rx="0.78" fill="#f7f8fc"/><rect x="-5.33" y="1.14" width="4.19" height="4.19" rx="0.78" fill="#f7f8fc"/><rect x="1.14" y="-5.33" width="4.19" height="4.19" rx="0.78" fill="#f7f8fc"/><rect x="1.14" y="1.14" width="4.19" height="4.19" rx="0.78" fill="#f7f8fc"/></g></svg>
<div class="t r" style="left:1106.5px;top:861.7px;font-size:13.6px;line-height:13.6px;color:#1d1d24;font-weight:400;"><b>Harness</b> support</div>
<div class="t" style="left:1082.2px;top:904.1px;font-size:15.5px;line-height:15.5px;color:#0b0b0d;font-weight:700;">Find the Best buddy to</div>
<div class="t" style="left:1082.2px;top:926.5px;font-size:15.5px;line-height:15.5px;color:#0b0b0d;font-weight:700;">support you</div>
<div class="t r" style="left:1082.2px;top:949.8px;font-size:11.6px;line-height:11.6px;color:#6b6d90;font-weight:400;">We are here 24/7 for you.</div>
<div class="t" style="left:1328.0px;top:862.2px;font-size:15.5px;line-height:15.5px;color:#0b0b0d;font-weight:700;">How to Configure Your</div>
<div class="t" style="left:1328.0px;top:884.2px;font-size:15.5px;line-height:15.5px;color:#0b0b0d;font-weight:700;">Builds with JFrog</div>
<div class="t" style="left:1328.0px;top:906.2px;font-size:15.5px;line-height:15.5px;color:#0b0b0d;font-weight:700;">Artifactory and</div>
<div class="t" style="left:1328.0px;top:928.2px;font-size:15.5px;line-height:15.5px;color:#0b0b0d;font-weight:700;">Harness</div>
<div class="a" style="left:1306px;top:977.5px;width:170px;height:1.2px;background:#5aa9ea"></div>
<div class="a" style="left:1327px;top:973px;width:15px;height:11px;background:#f3f4f7;border-radius:5px;box-shadow:0 0 2px rgba(0,0,0,0.12)"></div>
<div class="a" style="left:1361px;top:969px;width:35px;height:20px;background:#f4f5f8;border-radius:4px;box-shadow:0 0 2px rgba(0,0,0,0.12)"></div>
<div class="a" style="left:1373.5px;top:973px;width:9px;height:9px;background:#3aa0e8;border-radius:50%"></div>
<div class="a" style="left:1405px;top:969px;width:35px;height:20px;background:#0c6ed3;border-radius:4px"></div>
<svg class="a" style="left:1417px;top:972px;" width="12" height="12" viewBox="0 0 12 12"><circle cx="6" cy="4.5" r="3" stroke="#dce9fb" stroke-width="1" fill="none"/><path d="M2 10H10" stroke="#dce9fb" stroke-width="1"/></svg>
<div class="a" style="left:1459px;top:973px;width:15px;height:11px;background:#f3f4f7;border-radius:5px;box-shadow:0 0 2px rgba(0,0,0,0.12)"></div>
<svg class="a" style="left:1631px;top:927px;" width="24" height="24" viewBox="0 0 24 24"><path d="M6.1 9.2A8.2 8.2 0 1 1 20.9 14.9L21.4 17.1L15.4 17.6" stroke="#4f5162" stroke-width="1.5" fill="none" stroke-linejoin="round" stroke-linecap="round"/><circle cx="7.7" cy="16.5" r="5.3" stroke="#4f5162" stroke-width="1.5" fill="#fff"/><path d="M3.6 19.6L2.8 21.5L5.6 21.3" stroke="#4f5162" stroke-width="1.5" fill="#fff" stroke-linejoin="round"/></svg>
<div class="a" style="left:257px;top:938px;width:1406px;height:50px;background:linear-gradient(to bottom, rgba(20,20,40,0) 0%, rgba(20,20,40,0.015) 40%, rgba(20,20,40,0.04) 75%, rgba(20,20,40,0.085) 100%)"></div>
<svg class="a" style="left:322.5px;top:518px" width="204" height="162" viewBox="0 0 204 162"><defs><linearGradient id="g197" gradientUnits="userSpaceOnUse" x1="31" y1="145" x2="196" y2="83.7"><stop offset="0" stop-color="#cdf3c2" stop-opacity="0"/><stop offset="0.3" stop-color="#cdf3c2" stop-opacity="1"/><stop offset="0.85" stop-color="#cdf3c2" stop-opacity="1"/><stop offset="1" stop-color="#cdf3c2" stop-opacity="0.1"/></linearGradient></defs><path d="M31,145 L71.1,127.9 Q77.5,125.2 84.3,127.0 L123.9,137.2 Q130.7,139 136.9,135.7 L154.1,126.5 Q160.3,123.2 153.6,121.1 L135.4,115.5 Q128.7,113.4 135.1,110.6 L196,83.7" stroke="url(#g197)" stroke-opacity="0.35" stroke-width="4" fill="none" stroke-linejoin="round" stroke-linecap="round"/><path d="M31,145 L71.1,127.9 Q77.5,125.2 84.3,127.0 L123.9,137.2 Q130.7,139 136.9,135.7 L154.1,126.5 Q160.3,123.2 153.6,121.1 L135.4,115.5 Q128.7,113.4 135.1,110.6 L196,83.7" stroke="url(#g197)" stroke-width="1.7" fill="none" stroke-linejoin="round" stroke-linecap="round"/></svg>
<svg class="a" style="left:548.5px;top:518px" width="204" height="162" viewBox="0 0 204 162"><defs><linearGradient id="g198" gradientUnits="userSpaceOnUse" x1="31.3" y1="144.6" x2="200.8" y2="80.9"><stop offset="0" stop-color="#cde8fa" stop-opacity="0"/><stop offset="0.3" stop-color="#cde8fa" stop-opacity="1"/><stop offset="0.85" stop-color="#cde8fa" stop-opacity="1"/><stop offset="1" stop-color="#cde8fa" stop-opacity="0.1"/></linearGradient></defs><path d="M31.3,144.6 L84.7,123.6 Q91.2,121 98.1,122.4 L114.9,126.0 Q121.8,127.4 128.0,124.2 L141.7,117.2 Q147.9,114 141.1,112.2 L117.1,105.6 Q110.3,103.8 116.7,101.1 L120.5,99.5 Q126.9,96.8 133.8,97.7 L150.6,99.8 Q157.5,100.7 163.9,97.8 L200.8,80.9" stroke="url(#g198)" stroke-opacity="0.35" stroke-width="4" fill="none" stroke-linejoin="round" stroke-linecap="round"/><path d="M31.3,144.6 L84.7,123.6 Q91.2,121 98.1,122.4 L114.9,126.0 Q121.8,127.4 128.0,124.2 L141.7,117.2 Q147.9,114 141.1,112.2 L117.1,105.6 Q110.3,103.8 116.7,101.1 L120.5,99.5 Q126.9,96.8 133.8,97.7 L150.6,99.8 Q157.5,100.7 163.9,97.8 L200.8,80.9" stroke="url(#g198)" stroke-width="1.7" fill="none" stroke-linejoin="round" stroke-linecap="round"/></svg>
<svg class="a" style="left:775.5px;top:518px" width="204" height="162" viewBox="0 0 204 162"><defs><linearGradient id="g199" gradientUnits="userSpaceOnUse" x1="33.7" y1="141.4" x2="191.2" y2="77.6"><stop offset="0" stop-color="#cad9fa" stop-opacity="0"/><stop offset="0.3" stop-color="#cad9fa" stop-opacity="1"/><stop offset="0.85" stop-color="#cad9fa" stop-opacity="1"/><stop offset="1" stop-color="#cad9fa" stop-opacity="0.1"/></linearGradient></defs><path d="M33.7,141.4 L66.4,126.8 Q72.8,124 66.7,120.6 L60.7,117.4 Q54.6,114 61.2,111.6 L82.6,103.7 Q89.2,101.3 96.1,102.6 L119.6,107.3 Q126.5,108.6 132.8,105.6 L191.2,77.6" stroke="url(#g199)" stroke-opacity="0.35" stroke-width="4" fill="none" stroke-linejoin="round" stroke-linecap="round"/><path d="M33.7,141.4 L66.4,126.8 Q72.8,124 66.7,120.6 L60.7,117.4 Q54.6,114 61.2,111.6 L82.6,103.7 Q89.2,101.3 96.1,102.6 L119.6,107.3 Q126.5,108.6 132.8,105.6 L191.2,77.6" stroke="url(#g199)" stroke-width="1.7" fill="none" stroke-linejoin="round" stroke-linecap="round"/></svg>
<svg class="a" style="left:322.5px;top:703.4px" width="204" height="162" viewBox="0 0 204 162"><defs><linearGradient id="g200" gradientUnits="userSpaceOnUse" x1="33.7" y1="139.6" x2="198.5" y2="78.6"><stop offset="0" stop-color="#ead6fb" stop-opacity="0"/><stop offset="0.3" stop-color="#ead6fb" stop-opacity="1"/><stop offset="0.85" stop-color="#ead6fb" stop-opacity="1"/><stop offset="1" stop-color="#ead6fb" stop-opacity="0.1"/></linearGradient></defs><path d="M33.7,139.6 L198.5,78.6" stroke="url(#g200)" stroke-opacity="0.35" stroke-width="4" fill="none" stroke-linejoin="round" stroke-linecap="round"/><path d="M33.7,139.6 L198.5,78.6" stroke="url(#g200)" stroke-width="1.7" fill="none" stroke-linejoin="round" stroke-linecap="round"/></svg>
<svg class="a" style="left:322.5px;top:703.4px" width="204" height="162" viewBox="0 0 204 162"><defs><linearGradient id="g201" gradientUnits="userSpaceOnUse" x1="40" y1="114" x2="103" y2="143.3"><stop offset="0" stop-color="#ecdcfb" stop-opacity="0"/><stop offset="0.3" stop-color="#ecdcfb" stop-opacity="1"/><stop offset="0.85" stop-color="#ecdcfb" stop-opacity="1"/><stop offset="1" stop-color="#ecdcfb" stop-opacity="0.1"/></linearGradient></defs><path d="M40,114 L73.8,104.1 Q80.5,102.1 87.4,103.5 L105.6,107.2 Q112.5,108.6 119.3,110.0 L141.2,114.7 Q148,116.1 142.2,120.1 L133.3,126.2 Q127.5,130.2 121.3,133.5 L103,143.3" stroke="url(#g201)" stroke-opacity="0.35" stroke-width="4" fill="none" stroke-linejoin="round" stroke-linecap="round"/><path d="M40,114 L73.8,104.1 Q80.5,102.1 87.4,103.5 L105.6,107.2 Q112.5,108.6 119.3,110.0 L141.2,114.7 Q148,116.1 142.2,120.1 L133.3,126.2 Q127.5,130.2 121.3,133.5 L103,143.3" stroke="url(#g201)" stroke-width="1.7" fill="none" stroke-linejoin="round" stroke-linecap="round"/></svg>
<svg class="a" style="left:548.5px;top:703.4px" width="204" height="162" viewBox="0 0 204 162"><defs><linearGradient id="g202" gradientUnits="userSpaceOnUse" x1="122.5" y1="111.6" x2="201.3" y2="83.4"><stop offset="0" stop-color="#f9c3d5" stop-opacity="0"/><stop offset="0.3" stop-color="#f9c3d5" stop-opacity="1"/><stop offset="0.85" stop-color="#f9c3d5" stop-opacity="1"/><stop offset="1" stop-color="#f9c3d5" stop-opacity="0.1"/></linearGradient></defs><path d="M122.5,111.6 L201.3,83.4" stroke="url(#g202)" stroke-opacity="0.35" stroke-width="4" fill="none" stroke-linejoin="round" stroke-linecap="round"/><path d="M122.5,111.6 L201.3,83.4" stroke="url(#g202)" stroke-width="1.7" fill="none" stroke-linejoin="round" stroke-linecap="round"/></svg>
<svg class="a" style="left:548.5px;top:703.4px" width="204" height="162" viewBox="0 0 204 162"><defs><linearGradient id="g203" gradientUnits="userSpaceOnUse" x1="29" y1="132.1" x2="107.6" y2="142.4"><stop offset="0" stop-color="#f9c7d7" stop-opacity="0"/><stop offset="0.3" stop-color="#f9c7d7" stop-opacity="1"/><stop offset="0.85" stop-color="#f9c7d7" stop-opacity="1"/><stop offset="1" stop-color="#f9c7d7" stop-opacity="0.1"/></linearGradient></defs><path d="M29,132.1 L82.4,111.7 Q88.9,109.2 95.8,110.5 L113.8,113.9 Q120.7,115.2 127.6,116.6 L141.9,119.4 Q148.8,120.8 142.6,124.1 L107.6,142.4" stroke="url(#g203)" stroke-opacity="0.35" stroke-width="4" fill="none" stroke-linejoin="round" stroke-linecap="round" stroke-dasharray="7 5"/><path d="M29,132.1 L82.4,111.7 Q88.9,109.2 95.8,110.5 L113.8,113.9 Q120.7,115.2 127.6,116.6 L141.9,119.4 Q148.8,120.8 142.6,124.1 L107.6,142.4" stroke="url(#g203)" stroke-width="1.7" fill="none" stroke-linejoin="round" stroke-linecap="round" stroke-dasharray="7 5"/></svg>
<svg class="a" style="left:484px;top:530px;" width="30" height="31" viewBox="0 0 30 31"><defs><linearGradient id="gdep" x1="0" y1="0" x2="0" y2="1"><stop offset="0" stop-color="#d3f3c9"/><stop offset="1" stop-color="#e3f8dc"/></linearGradient></defs><path d="M15 1L28 8.2V22.8L15 30L2 22.8V8.2Z" fill="url(#gdep)" stroke="url(#gdep)" stroke-width="2.5" stroke-linejoin="round"/><g transform="rotate(-30 15 15.5)"><path d="M15 15.5C12.5 12 7 12 7 15.5C7 19 12.5 19 15 15.5C17.5 12 23 12 23 15.5C23 19 17.5 19 15 15.5Z" stroke="#fff" stroke-width="2.2" fill="none"/></g></svg>
<svg class="a" style="left:711px;top:530px;" width="31" height="31" viewBox="0 0 31 31"><defs><linearGradient id="gci" x1="0" y1="0" x2="1" y2="1"><stop offset="0" stop-color="#d2ecf8"/><stop offset="1" stop-color="#dbeefb"/></linearGradient></defs><circle cx="15.5" cy="15.5" r="14.5" fill="url(#gci)"/><path d="M10 2.5L13 6.5M25.5 25L21 20" stroke="#fff" stroke-width="2" stroke-linecap="round"/><circle cx="17" cy="12.5" r="5" stroke="#fff" stroke-width="2.3" fill="none"/><path d="M20.5 16L27.5 22.5" stroke="#fff" stroke-width="2.3" stroke-linecap="round"/></svg>
<svg class="a" style="left:938px;top:530px;" width="28" height="32" viewBox="0 0 28 32"><defs><linearGradient id="gsto" x1="0" y1="0" x2="0" y2="1"><stop offset="0" stop-color="#d6dcfb"/><stop offset="1" stop-color="#e4d9fb"/></linearGradient></defs><path d="M14 1.5L26 5.5V14C26 22 20.5 27.5 14 30.5C7.5 27.5 2 22 2 14V5.5Z" fill="url(#gsto)"/><circle cx="14" cy="13.5" r="4.5" stroke="#fff" stroke-width="2.2" fill="none"/><path d="M17.5 16.5L23 20" stroke="#fff" stroke-width="2.2" stroke-linecap="round"/></svg>
<svg class="a" style="left:484px;top:714.5px;" width="31" height="31" viewBox="0 0 31 31"><circle cx="15.5" cy="15.5" r="14.4" fill="#ebdcfb"/><circle cx="15.5" cy="15.5" r="7.5" fill="#e4d3fa"/><path d="M15.5 0.5V8M2.5 23L9 19.2M28.5 23L22 19.2" stroke="#fff" stroke-width="2.2"/><path d="M12.3 15.6L14.6 17.8L18.7 13.6" stroke="#fff" stroke-width="1.7" fill="none" stroke-linecap="round" stroke-linejoin="round"/></svg>
<svg class="a" style="left:709px;top:714px;" width="33" height="34" viewBox="0 0 33 34"><path d="M3 16.3L28.5 2.3V29.8Z" fill="#fad3df" stroke="#fad3df" stroke-width="3.2" stroke-linejoin="round"/><path d="M14.2 13.2L23.5 3.8M18.3 24.6L30.5 19.3" stroke="#fff" stroke-width="2.2"/></svg>
<svg class="a" style="left:218px;top:137px" width="44" height="46" viewBox="218 137 44 46"><path d="M228.3 145.2C228.1 142.6 229.6 141.1 231.7 141.1C233.9 141.1 235.3 142.6 235.4 144.6L236.3 153.6C236.6 151.8 238.3 151.2 240.1 151.5C242 151.8 243.3 152.6 243.7 154.2C244.1 151.9 245.8 150.9 247.6 151.1C249.6 151.4 250.7 152.6 251 154.5C251.7 153 253.1 152.8 254.6 153.3C256.5 154 257.3 155.2 257.2 157.2L256.7 166C256.5 169 254.9 171.4 252.6 173.8L251 176.5V178.6H234.9V175.2C233.6 173.1 231.8 171.2 229.8 169.2L223.5 162.3C221.8 160.5 221.7 158.6 223.2 157.2C224.8 155.8 227 156.2 228.6 157.7L230.2 159.3Z" fill="#fff" stroke="#000" stroke-width="1.9" stroke-linejoin="round"/><path d="M239.3 162.6V171.8M244.2 162.6V171.8M249.2 162.6V171.8" stroke="#000" stroke-width="1.7"/></svg>
</div></body></html>
